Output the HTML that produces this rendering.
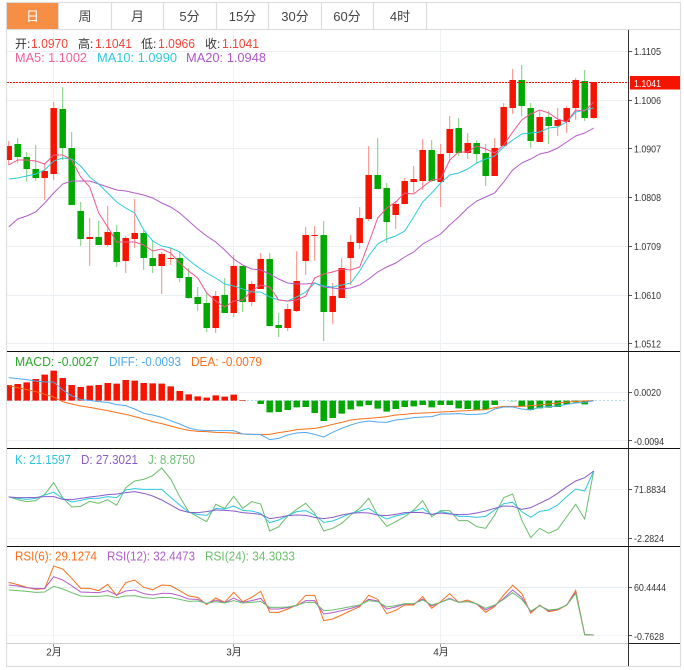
<!DOCTYPE html>
<html><head><meta charset="utf-8"><style>
html,body{margin:0;padding:0;background:#fff;width:684px;height:670px;overflow:hidden}
svg{display:block;font-family:"Liberation Sans","Noto Sans CJK SC",sans-serif}
polyline,path{vector-effect:non-scaling-stroke}
</style></head><body>
<svg width="684" height="670" viewBox="0 0 684 670" xmlns="http://www.w3.org/2000/svg">
<rect width="684" height="670" fill="#fff"/>
<!-- grid -->
<g stroke="#e9eff3" stroke-width="1" fill="none">
<path d="M7 51.5H628M7 100.5H628M7 148.5H628M7 197.5H628M7 246.5H628M7 295.5H628M7 343.5H628"/>
<path d="M7 392.5H628M7 440.5H628" stroke="#edf1f5"/>
<path d="M7 489.5H628M7 538.5H628" stroke="#eff3f5"/>
<path d="M7 587.5H628" stroke="#e4edf5"/><path d="M7 635.5H628" stroke="#f2f4f6"/>
<path d="M53.5 30V643M233.5 30V643M440.5 30V643" stroke="#eef2f5"/>
</g>
<!-- candles -->
<g transform="translate(8.7,0) scale(9,1)" fill="none">
<path stroke="#f88a80" stroke-width="1" d="M0 141V165M4 163V200M5 102V180M9 218V266M11 206V247M13 236V273M14 199V248M17 252V294M18 248V265M23 291V333M25 255V317M27 281V306M28 253V289M31 304V331M32 251V312M33 227V275M34 226V261M36 283V324M37 258V298M38 235V285M39 207V249M40 146V221M43 201V229M44 178V204M45 166V193M46 139V190M48 144V207M49 116V162M51 133V159M54 138V176M55 103V146M56 69V114M59 110V142M61 108V136M62 106V133M63 78V120M65 82V119"/>
<path stroke="#7ccf7c" stroke-width="1" d="M1 138V163M2 152V182M3 145V181M6 87V160M7 132V205M8 202V246M10 221V245M12 225V267M15 230V270M16 240V273M19 252V282M20 268V299M21 287V311M22 293V332M24 278V313M26 266V312M29 253V326M30 313V337M35 221V341M41 138V189M42 183V243M47 140V182M50 118V156M52 140V163M53 144V186M57 65V116M58 103V148M60 111V144M64 70V121"/>
<path stroke="#f51400" stroke-width="6.5" d="M0 146V160M4 171V178M5 108V174M9 237V239M11 232V245M13 238V261M14 233V239M17 254V266M18 258V259M23 296V328M25 266V313M27 284V302M28 259V289M31 309V328M32 281V311M33 235V261M34 235V236M36 296V312M37 268V298M38 242V258M39 218V243M40 175V219M43 204V215M44 181V204M45 179V182M46 150V181M48 154V182M49 129V153M51 143V153M54 148V176M55 107V146M56 80V108M59 117V142M61 120V126M62 108V122M63 80V108M65 82V118"/>
<path stroke="#00a800" stroke-width="6.5" d="M1 144V157M2 157V169M3 169V178M6 109V148M7 148V205M8 211V239M10 237V245M12 232V262M15 233V258M16 258V266M19 258V278M20 277V298M21 297V304M22 303V328M24 295V313M26 266V302M29 259V326M30 325V328M35 235V312M41 175V189M42 188V222M47 150V181M50 128V153M52 143V154M53 153V176M57 80V106M58 108V141M60 117V126M64 81V118"/>
<!-- MA lines -->
<polyline fill="none" stroke="#b45cc8" stroke-width="1" points="0,227 1,219 2,216 3,212 4,203 5,193 6,184 7,181 8,181 9,181 10,184 11,187 12,190 13,191 14,193 15,195 16,198 17,203 18,207 19,213 20,221 21,229 22,236 23,242 24,250 25,259 26,265 27,269 28,270 29,274 30,279 31,283 32,284 33,284 34,283 35,287 36,288 37,289 38,288 39,285 40,279 41,272 42,267 43,263 44,257 45,252 46,244 47,239 48,234 49,225 50,217 51,208 52,201 53,197 54,193 55,182 56,170 57,163 58,159 59,154 60,152 61,148 62,142 63,136 64,133 65,128"/>
<polyline fill="none" stroke="#2ccbdc" stroke-width="1" points="0,179 1,178 2,176 3,174 4,170 5,161 6,158 7,159 8,166 9,177 10,184 11,193 12,202 13,208 14,213 15,230 16,241 17,246 18,248 19,252 20,260 21,267 22,273 23,278 24,284 25,286 26,289 27,292 28,292 29,297 30,300 31,301 32,297 33,292 34,283 35,286 36,287 37,285 38,283 39,271 40,256 41,244 42,239 43,236 44,231 45,217 46,202 47,193 48,183 49,175 50,173 51,169 52,163 53,159 54,156 55,147 56,140 57,134 58,133 59,132 60,128 61,127 62,122 63,112 64,110 65,108"/>
<polyline fill="none" stroke="#f2558c" stroke-width="1" points="0,165 1,160 2,160 3,161 4,164 5,155 6,155 7,160 8,177 9,187 10,213 11,227 12,242 13,242 14,242 15,245 16,251 17,249 18,253 19,263 20,271 21,278 22,293 23,301 24,307 25,301 26,300 27,291 28,285 29,287 30,300 31,301 32,300 33,296 34,278 35,274 36,272 37,269 38,270 39,267 40,243 41,218 42,208 43,202 44,193 45,194 46,187 47,180 48,179 49,160 50,152 51,152 52,146 53,149 54,153 55,145 56,132 57,120 58,114 59,110 60,113 61,119 62,122 63,110 64,111 65,102"/>
</g>
<!-- last price dotted -->
<path d="M7 82.5H628" stroke="#f51400" stroke-width="1" stroke-dasharray="2 1" fill="none"/>
<!-- MACD -->
<path d="M7 400.5H626" stroke="#b5dcec" stroke-width="1" stroke-dasharray="2 2" fill="none"/>
<g transform="translate(8.7,345) scale(9,.33333)" fill="none">
<path stroke="#f51400" stroke-width="6.5" d="M0 167V120M1 167V117M2 167V112M3 167V102M4 167V89M5 167V77M6 167V99M7 167V120M8 167V126M9 167V122M10 167V120M11 167V114M12 167V116M13 167V105M14 167V107M15 167V114M16 167V115M17 167V116M18 167V124M19 167V138M20 167V148M21 167V154M22 167V158M23 167V151M24 167V155M25 167V149M26 167V165"/>
<path stroke="#00a800" stroke-width="6.5" d="M28 167V177M29 167V202M30 167V201M31 167V195M32 167V187M33 167V186M34 167V204M35 167V228M36 167V219M37 167V206M38 167V193M39 167V184M40 167V180M41 167V191M42 167V200M43 167V192M44 167V186M45 167V184M46 167V180M47 167V187M48 167V180M49 167V180M50 167V190M51 167V192M52 167V196M53 167V194M54 167V180M57 167V185M58 167V195M59 167V190M60 167V188M61 167V186M62 167V178M63 167V172M64 167V178"/>
<path stroke="#a6dca6" stroke-width="6.5" d="M56 167V170"/>
<polyline stroke="#f8701a" stroke-width="1" points="0,122 1,128 2,134 3,140 4,148 5,156 6,170 7,177 8,183 9,187 10,192 11,197 12,203 13,208 14,215 15,222 16,230 17,236 18,243 19,250 20,256 21,259 22,260 23,262 24,263 25,264 26,267 27,268 28,268 29,268 30,263 31,259 32,254 33,252 34,250 35,245 36,238 37,232 38,225 39,222 40,220 41,218 42,215 43,210 44,208 45,205 46,204 47,203 48,201 49,200 50,198 51,197 52,195 53,194 54,188 55,184 56,184 57,184 58,182 59,180 60,177 61,174 62,171 63,169 64,168 65,167"/>
<polyline stroke="#4fa8ec" stroke-width="1" points="0,98 1,101 2,104 3,108 4,111 5,111 6,135 7,152 8,164 9,166 10,170 11,172 12,179 13,182 14,192 15,205 16,210 17,217 18,227 19,237 20,249 21,255 22,257 23,257 24,257 25,257 26,267 27,268 28,269 29,284 30,280 31,270 32,264 33,262 34,268 35,276 36,262 37,250 38,240 39,232 40,228 41,231 42,232 43,225 44,222 45,218 46,216 47,215 48,207 49,207 50,206 51,208 52,208 53,206 54,192 55,186 56,186 57,192 58,195 59,187 60,185 61,183 62,178 63,174 64,172 65,167"/>
</g>
<!-- KDJ -->
<g transform="translate(8.7,445) scale(9,.33333)" fill="none">
<polyline stroke="#6cbe6c" stroke-width="1" points="0,155 1,164 2,170 3,167 4,148 5,113 6,158 7,186 8,184 9,169 10,175 11,164 12,181 13,128 14,108 15,103 16,92 17,69 18,102 19,155 20,200 21,215 22,230 23,178 24,190 25,154 26,190 27,170 28,177 29,258 30,245 31,213 32,193 33,175 34,205 35,258 36,250 37,235 38,210 39,190 40,160 41,210 42,244 43,230 44,215 45,195 46,167 47,215 48,197 49,197 50,227 51,227 52,245 53,250 54,210 55,158 56,147 57,225 58,278 59,250 60,265 61,253 62,215 63,178 64,222 65,78"/>
<polyline stroke="#2cc8dc" stroke-width="1" points="0,156 1,160 2,163 3,160 4,150 5,142 6,160 7,171 8,166 9,160 10,160 11,155 12,158 13,135 14,131 15,133 16,133 17,133 18,157 19,180 20,201 21,208 22,211 23,190 24,192 25,183 26,196 27,198 28,205 29,233 30,225 31,212 32,200 33,197 34,210 35,232 36,228 37,217 38,205 39,198 40,190 41,208 42,222 43,213 44,207 45,198 46,190 47,209 48,200 49,205 50,214 51,214 52,217 53,214 54,195 55,176 56,172 57,200 58,217 59,199 60,195 61,180 62,155 63,132 64,138 65,78"/>
<polyline stroke="#8a5cc8" stroke-width="1" points="0,156 1,158 2,158 3,157 4,155 5,155 6,163 7,164 8,160 9,156 10,153 11,149 12,147 13,143 14,140 15,145 16,153 17,165 18,180 19,195 20,202 21,203 22,200 23,195 24,196 25,198 26,203 27,205 28,208 29,221 30,217 31,212 32,210 33,211 34,217 35,221 36,217 37,210 38,205 39,203 40,204 41,210 42,212 43,208 44,203 45,202 46,203 47,208 48,204 49,207 50,209 51,208 52,204 53,198 54,190 55,183 56,184 57,193 58,188 59,175 60,162 61,145 62,125 63,108 64,98 65,78"/>
</g>
<!-- RSI -->
<g transform="translate(8.7,545) scale(9,.33333)" fill="none">
<polyline stroke="#f8701a" stroke-width="1" points="0,112 1,119 2,127 3,133 4,131 5,63 6,72 7,100 8,130 9,130 10,137 11,118 12,152 13,113 14,105 15,127 16,134 17,120 18,122 19,137 20,153 21,157 22,179 23,159 24,172 25,142 26,170 27,157 28,139 29,202 30,202 31,192 32,180 33,151 34,151 35,227 36,222 37,210 38,197 39,185 40,151 41,163 42,206 43,196 44,180 45,180 46,155 47,190 48,170 49,146 50,172 51,165 52,177 53,202 54,185 55,150 56,121 57,145 58,205 59,180 60,200 61,195 62,180 63,136 64,269 65,270"/>
<polyline stroke="#b45cc8" stroke-width="1" points="0,120 1,123 2,128 3,131 4,130 5,95 6,105 7,122 8,141 9,142 10,143 11,137 12,150 13,138 14,135 15,146 16,150 17,145 18,145 19,152 20,162 21,163 22,176 23,165 24,173 25,159 26,172 27,167 28,160 29,192 30,192 31,188 32,182 33,167 34,167 35,207 36,203 37,197 38,190 39,182 40,163 41,168 42,192 43,186 44,177 45,177 46,162 47,183 48,172 49,160 50,172 51,169 52,177 53,195 54,182 55,160 56,135 57,157 58,200 59,182 60,197 61,193 62,180 63,142 64,269 65,270"/>
<polyline stroke="#6cbe6c" stroke-width="1" points="0,135 1,137 2,139 3,142 4,141 5,124 6,132 7,143 8,153 9,154 10,154 11,152 12,158 13,153 14,152 15,158 16,160 17,157 18,158 19,163 20,169 21,168 22,175 23,170 24,174 25,167 26,174 27,172 28,169 29,187 30,187 31,186 32,181 33,172 34,172 35,197 36,195 37,190 38,185 39,180 40,167 41,170 42,186 43,182 44,176 45,176 46,165 47,180 48,172 49,162 50,172 51,170 52,176 53,190 54,180 55,163 56,143 57,163 58,198 59,182 60,195 61,192 62,181 63,145 64,269 65,270"/>
</g>
<!-- cover left overflow and frame -->
<rect x="0" y="0" width="6" height="670" fill="#fff"/>
<g fill="none">
<path d="M6.5 3V666M680.5 3V666M6 2.5H681M6 666.5H681" stroke="#dedede" stroke-width="1.2"/>
<path d="M7 29.5H680" stroke="#dedede" stroke-width="1.3"/>
<path d="M58.5 3V29M111.5 3V29M163.5 3V29M216.5 3V29M268.5 3V29M321.5 3V29M373.5 3V29M426.5 3V29" stroke="#dcdcdc" stroke-width="1.2"/>
<path d="M7 351.5H680M7 448.5H680M7 546.5H680" stroke="#111" stroke-width="1"/>
<path d="M7 643.5H628" stroke="#cfcfcf" stroke-width="1"/>
<path d="M628 643.5H680" stroke="#222" stroke-width="1"/>
<path d="M628.5 30V666" stroke="#333" stroke-width="1"/>
<path d="M629 51.5H632M629 100.5H632M629 148.5H632M629 197.5H632M629 246.5H632M629 295.5H632M629 343.5H632M629 392.5H632M629 440.5H632M629 489.5H632M629 538.5H632M629 587.5H632M629 635.5H632" stroke="#555" stroke-width="1"/>
<path d="M53.5 644V647M233.5 644V647M440.5 644V647" stroke="#999" stroke-width="1"/>
</g>
<!-- tabs -->
<rect x="7" y="3" width="51" height="26" fill="#f68f45"/>
<g font-size="13" text-anchor="middle" fill="#444">
<text x="32.5" y="21" fill="#fff">日</text>
<text x="85" y="21">周</text>
<text x="137.5" y="21">月</text>
<text x="189.5" y="21">5分</text>
<text x="242.5" y="21">15分</text>
<text x="295" y="21">30分</text>
<text x="347" y="21">60分</text>
<text x="400" y="21">4时</text>
</g>
<!-- info -->
<g font-size="13">
<g fill="#333" font-size="12">
<text x="15" y="48">开:</text><text x="78" y="48">高:</text><text x="141" y="48">低:</text><text x="205" y="48">收:</text>
</g>
<g fill="#f44336">
<text x="31" y="48" textLength="37" lengthAdjust="spacingAndGlyphs">1.0970</text>
<text x="95" y="48" textLength="37" lengthAdjust="spacingAndGlyphs">1.1041</text>
<text x="158" y="48" textLength="37" lengthAdjust="spacingAndGlyphs">1.0966</text>
<text x="222" y="48" textLength="37" lengthAdjust="spacingAndGlyphs">1.1041</text>
</g>
<text x="15" y="62" fill="#f0609a" textLength="72" lengthAdjust="spacingAndGlyphs">MA5: 1.1002</text>
<text x="97" y="62" fill="#2fc8dc" textLength="80" lengthAdjust="spacingAndGlyphs">MA10: 1.0990</text>
<text x="186" y="62" fill="#b056c8" textLength="80" lengthAdjust="spacingAndGlyphs">MA20: 1.0948</text>
<text x="15" y="366" fill="#2aa82a" textLength="84" lengthAdjust="spacingAndGlyphs">MACD: -0.0027</text>
<text x="109" y="366" fill="#4fa8ec" textLength="72" lengthAdjust="spacingAndGlyphs">DIFF: -0.0093</text>
<text x="191" y="366" fill="#f8701a" textLength="71" lengthAdjust="spacingAndGlyphs">DEA: -0.0079</text>
<text x="15" y="464" fill="#2cc4dc" textLength="56" lengthAdjust="spacingAndGlyphs">K: 21.1597</text>
<text x="81" y="464" fill="#8a5cc8" textLength="57" lengthAdjust="spacingAndGlyphs">D: 27.3021</text>
<text x="148" y="464" fill="#6cbe6c" textLength="47" lengthAdjust="spacingAndGlyphs">J: 8.8750</text>
<text x="15" y="560.5" fill="#f8701a" textLength="82" lengthAdjust="spacingAndGlyphs">RSI(6): 29.1274</text>
<text x="107" y="560.5" fill="#b060c8" textLength="88" lengthAdjust="spacingAndGlyphs">RSI(12): 32.4473</text>
<text x="205" y="560.5" fill="#6cbe6c" textLength="90" lengthAdjust="spacingAndGlyphs">RSI(24): 34.3033</text>
</g>
<!-- price tag -->
<rect x="630" y="76" width="50" height="13.5" fill="#f51400"/>
<text x="634" y="87" font-size="10.5" fill="#fff" textLength="27" lengthAdjust="spacingAndGlyphs">1.1041</text>
<!-- axis labels -->
<g font-size="10.5" fill="#333">
<text x="634" y="54.8" textLength="27" lengthAdjust="spacingAndGlyphs">1.1105</text>
<text x="634" y="103.8" textLength="27" lengthAdjust="spacingAndGlyphs">1.1006</text>
<text x="634" y="152.4" textLength="27" lengthAdjust="spacingAndGlyphs">1.0907</text>
<text x="634" y="201.2" textLength="27" lengthAdjust="spacingAndGlyphs">1.0808</text>
<text x="634" y="249.8" textLength="27" lengthAdjust="spacingAndGlyphs">1.0709</text>
<text x="634" y="298.8" textLength="27" lengthAdjust="spacingAndGlyphs">1.0610</text>
<text x="634" y="347.4" textLength="27" lengthAdjust="spacingAndGlyphs">1.0512</text>
<text x="634" y="396" textLength="27" lengthAdjust="spacingAndGlyphs">0.0020</text>
<text x="634" y="444.8" textLength="30" lengthAdjust="spacingAndGlyphs">-0.0094</text>
<text x="634" y="493" textLength="32" lengthAdjust="spacingAndGlyphs">71.8834</text>
<text x="634" y="542.2" textLength="30" lengthAdjust="spacingAndGlyphs">-2.2824</text>
<text x="634" y="591" textLength="32" lengthAdjust="spacingAndGlyphs">60.4444</text>
<text x="634" y="639.8" textLength="30" lengthAdjust="spacingAndGlyphs">-0.7628</text>
</g>
<g font-size="10" fill="#333">
<text x="54" y="655.5" text-anchor="middle">2月</text>
<text x="234" y="655.5" text-anchor="middle">3月</text>
<text x="441" y="655.5" text-anchor="middle">4月</text>
</g>
</svg>
</body></html>
